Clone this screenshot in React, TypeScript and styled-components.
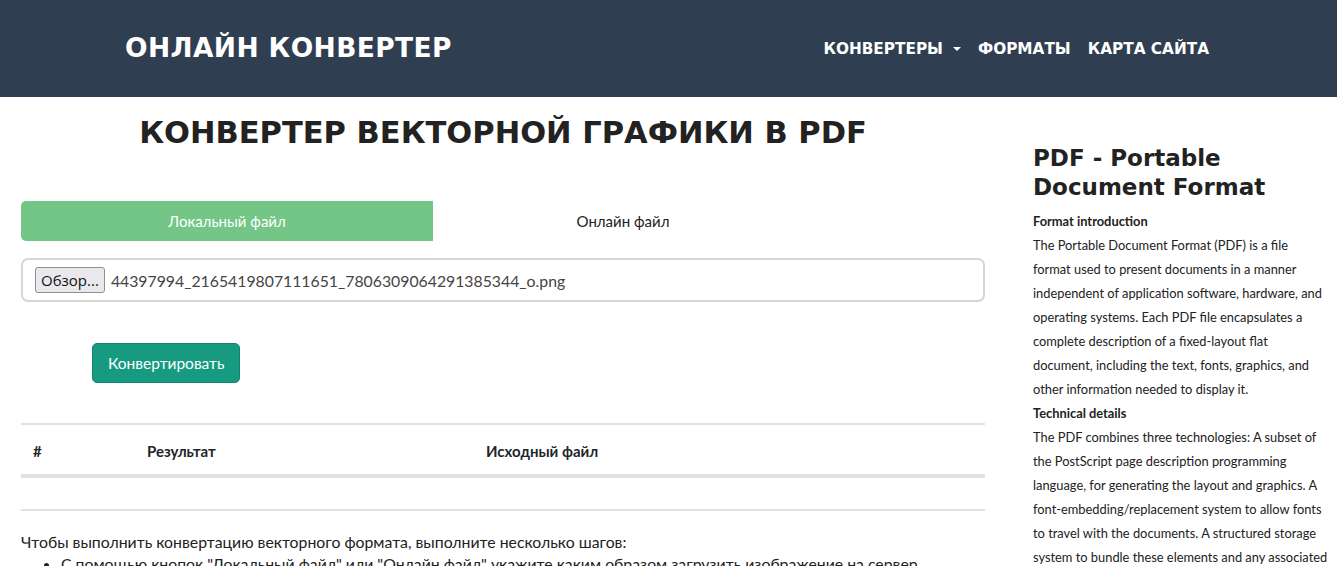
import React from "react";
import styled, { createGlobalStyle } from "styled-components";

const GlobalStyle = createGlobalStyle`
  * { box-sizing: border-box; }
  body {
    margin: 0;
    font-family: "Lato", "Open Sans", sans-serif;
    color: #212529;
    background: #fff;
  }
`;

const Header = styled.header`
  height: 97px;
  background: #2f3e50;
  display: flex;
  align-items: center;
  justify-content: space-between;
  padding: 0 128px 0 125px;
`;

const Brand = styled.a`
  font-family: "DejaVu Sans", sans-serif;
  font-weight: 700;
  font-size: 26.5px;
  letter-spacing: 0.4px;
  color: #fff;
  text-decoration: none;
  padding-bottom: 2px;
`;

const Nav = styled.nav`
  display: flex;
  align-items: center;
  gap: 17px;
`;

const NavLink = styled.a`
  font-family: "DejaVu Sans", sans-serif;
  font-weight: 700;
  font-size: 15.3px;
  color: #fff;
  text-decoration: none;
  display: flex;
  align-items: center;
  gap: 10px;
`;

const Caret = styled.span`
  width: 0;
  height: 0;
  border-left: 4px solid transparent;
  border-right: 4px solid transparent;
  border-top: 4px solid #fff;
`;

const Page = styled.div`
  display: grid;
  grid-template-columns: 1003px 1fr;
`;

const Main = styled.main`
  padding: 0 18px 0 21px;
`;

const Title = styled.h1`
  margin: 16px 0 0;
  text-align: center;
  font-family: "DejaVu Sans", sans-serif;
  font-weight: 700;
  font-size: 30.5px;
  line-height: 40px;
  color: #222;
`;

const Tabs = styled.div`
  display: flex;
  margin-top: 48px;
`;

const Tab = styled.div<{ active?: boolean; w: number }>`
  width: ${(p) => p.w}px;
  height: 40px;
  display: flex;
  align-items: center;
  justify-content: center;
  font-size: 15px;
  color: ${(p) => (p.active ? "#fff" : "#222")};
  background: ${(p) => (p.active ? "#73c686" : "transparent")};
  border-radius: ${(p) => (p.active ? "5px 0 0 5px" : "0")};
`;

const FileBox = styled.div`
  margin-top: 17px;
  height: 44px;
  border: 2px solid #d6d6d6;
  border-radius: 7px;
  display: flex;
  align-items: center;
  padding: 0 12px;
  gap: 6px;
  font-size: 15.8px;
  color: #444;
`;

const BrowseButton = styled.button`
  font-family: "Open Sans", sans-serif;
  font-size: 15px;
  height: 26px;
  padding: 0 5px;
  border: 1px solid #8f8f8f;
  border-radius: 3px;
  background: #e9e9ed;
  color: #111;
`;

const ConvertRow = styled.div`
  padding: 41px 0 0 71px;
`;

const ConvertButton = styled.button`
  height: 40px;
  padding: 0 15px;
  background: #169b80;
  border: 1px solid #12836c;
  border-radius: 5px;
  color: #fff;
  font-family: "Lato", sans-serif;
  font-size: 15.5px;
`;

const Table = styled.table`
  width: 100%;
  margin-top: 40px;
  border-collapse: collapse;
  border-top: 2px solid #dee2e6;
  font-size: 15px;
`;

const Th = styled.th<{ w?: number }>`
  text-align: left;
  font-weight: 700;
  padding: 17px 12px 14px;
  width: ${(p) => (p.w ? `${p.w}px` : "auto")};
  border-bottom: 4px solid #dee2e6;
`;

const Td = styled.td`
  height: 34px;
  border-bottom: 2px solid #dee2e6;
`;

const Steps = styled.div`
  margin-top: 20px;
  font-size: 15.8px;
  line-height: 22px;
  color: #222;
`;

const StepList = styled.ul`
  margin: 0;
  padding-left: 40px;
`;

const Sidebar = styled.aside`
  padding: 47px 0 0 30px;
  font-size: 12.85px;
  line-height: 24px;
  color: #222;
`;

const SideTitle = styled.h2`
  margin: 0 0 7px;
  font-family: "DejaVu Sans", sans-serif;
  font-weight: 700;
  font-size: 23px;
  line-height: 29px;
  color: #222;
`;

const SideHeading = styled.div`
  font-weight: 700;
`;

const SideText = styled.p`
  margin: 0;
  white-space: nowrap;
`;

const intro = [
  "The Portable Document Format (PDF) is a file",
  "format used to present documents in a manner",
  "independent of application software, hardware, and",
  "operating systems. Each PDF file encapsulates a",
  "complete description of a fixed-layout flat",
  "document, including the text, fonts, graphics, and",
  "other information needed to display it.",
];

const technical = [
  "The PDF combines three technologies: A subset of",
  "the PostScript page description programming",
  "language, for generating the layout and graphics. A",
  "font-embedding/replacement system to allow fonts",
  "to travel with the documents. A structured storage",
  "system to bundle these elements and any associated",
  "content into a single file, with data compression",
  "where appropriate.",
];

const Lines: React.FC<{ lines: string[] }> = ({ lines }) => (
  <SideText>
    {lines.map((l, i) => (
      <React.Fragment key={i}>
        {l}
        {i < lines.length - 1 && <br />}
      </React.Fragment>
    ))}
  </SideText>
);

export default function App() {
  return (
    <>
      <GlobalStyle />
      <Header>
        <Brand href="#">ОНЛАЙН КОНВЕРТЕР</Brand>
        <Nav>
          <NavLink href="#">
            КОНВЕРТЕРЫ <Caret />
          </NavLink>
          <NavLink href="#">ФОРМАТЫ</NavLink>
          <NavLink href="#">КАРТА САЙТА</NavLink>
        </Nav>
      </Header>
      <Page>
        <Main>
          <Title>КОНВЕРТЕР ВЕКТОРНОЙ ГРАФИКИ В PDF</Title>
          <Tabs>
            <Tab active w={412}>Локальный файл</Tab>
            <Tab w={380}>Онлайн файл</Tab>
          </Tabs>
          <FileBox>
            <BrowseButton>Обзор...</BrowseButton>
            <span>44397994_2165419807111651_7806309064291385344_o.png</span>
          </FileBox>
          <ConvertRow>
            <ConvertButton>Конвертировать</ConvertButton>
          </ConvertRow>
          <Table>
            <thead>
              <tr>
                <Th w={114}>#</Th>
                <Th w={339}>Результат</Th>
                <Th>Исходный файл</Th>
              </tr>
            </thead>
            <tbody>
              <tr>
                <Td />
                <Td />
                <Td />
              </tr>
            </tbody>
          </Table>
          <Steps>
            Чтобы выполнить конвертацию векторного формата, выполните несколько шагов:
            <StepList>
              <li>
                С помощью кнопок "Локальный файл" или "Онлайн файл" укажите каким образом
                загрузить изображение на сервер.
              </li>
            </StepList>
          </Steps>
        </Main>
        <Sidebar>
          <SideTitle>
            PDF - Portable
            <br />
            Document Format
          </SideTitle>
          <SideHeading>Format introduction</SideHeading>
          <Lines lines={intro} />
          <SideHeading>Technical details</SideHeading>
          <Lines lines={technical} />
        </Sidebar>
      </Page>
    </>
  );
}
